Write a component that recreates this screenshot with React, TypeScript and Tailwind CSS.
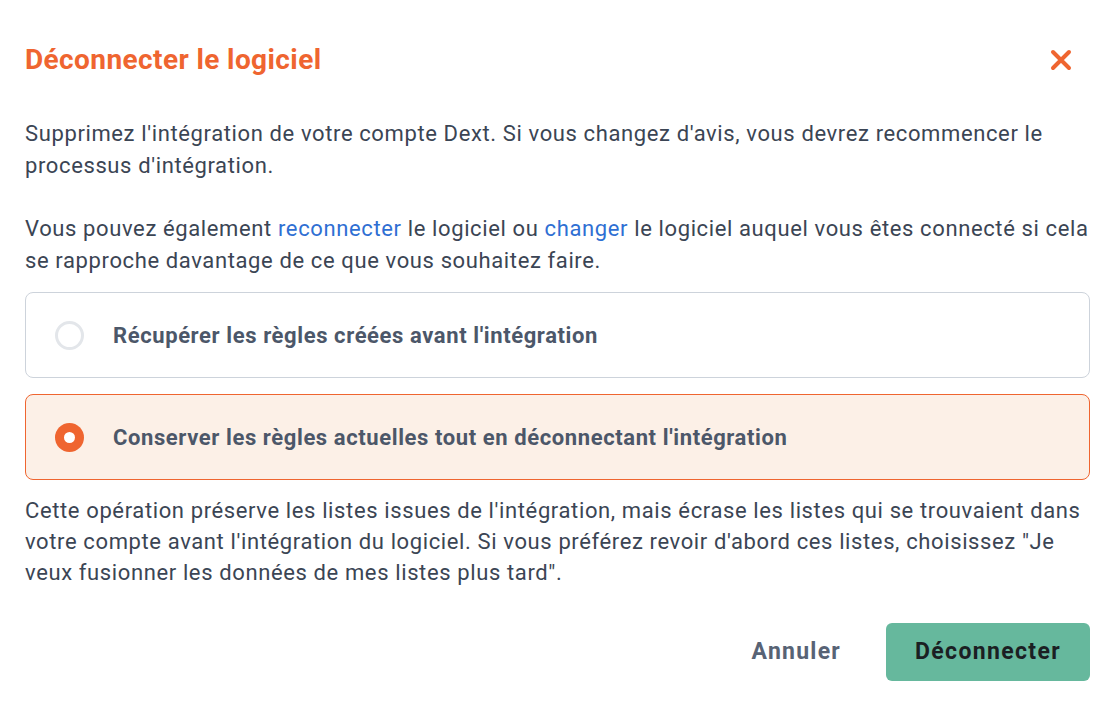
import React, { useState } from 'react';

const options = [
  { id: 'restore', label: "Récupérer les règles créées avant l'intégration" },
  { id: 'keep', label: "Conserver les règles actuelles tout en déconnectant l'intégration" },
];

export default function App() {
  const [selected, setSelected] = useState('keep');

  return (
    <div className="w-[1114px] h-[706px] bg-white font-['Roboto',sans-serif] text-[#3b4554] px-[25px] pt-[44px]">
      <div className="flex items-center justify-between h-[32px] pr-[16px]">
        <h2 className="text-[28px] font-bold text-[#ef6530] tracking-[0.4px]">Déconnecter le logiciel</h2>
        <button className="text-[#ef6530]">
          <svg width="24" height="24" viewBox="0 0 24 24" fill="none" stroke="currentColor" strokeWidth="4" strokeLinecap="round">
            <path d="M4 4l16 16M20 4L4 20" />
          </svg>
        </button>
      </div>

      <p className="mt-[42px] text-[22px] leading-[32px] tracking-[0.62px] pr-[10px]">
        Supprimez l'intégration de votre compte Dext. Si vous changez d'avis, vous devrez recommencer le processus d'intégration.
      </p>

      <p className="mt-[31px] text-[22px] leading-[32px] tracking-[0.62px]">
        Vous pouvez également <a className="text-[#2f6fd3]">reconnecter</a> le logiciel ou{' '}
        <a className="text-[#2f6fd3]">changer</a> le logiciel auquel vous êtes connecté si cela se rapproche davantage de ce que vous souhaitez faire.
      </p>

      <div className="mt-[15px] flex flex-col gap-[16px] mr-[-1px]">
        {options.map((o) => {
          const on = selected === o.id;
          return (
            <button
              key={o.id}
              onClick={() => setSelected(o.id)}
              className={`flex items-center h-[86px] rounded-[8px] border text-left pl-[29px] ${
                on ? 'border-[#ef6530] bg-[#fcf0e7]' : 'border-[#cdd3db] bg-white'
              }`}
            >
              {on ? (
                <span className="w-[29px] h-[29px] rounded-full bg-[#ef6530] flex items-center justify-center">
                  <span className="w-[11px] h-[11px] rounded-full bg-white" />
                </span>
              ) : (
                <span className="w-[29px] h-[29px] rounded-full border-[3px] border-[#e3e6ea]" />
              )}
              <span className="ml-[29px] text-[22px] font-bold text-[#4c5769] tracking-[0.6px]">{o.label}</span>
            </button>
          );
        })}
      </div>

      <p className="mt-[15px] text-[22px] leading-[31px] tracking-[0.62px]">
        Cette opération préserve les listes issues de l'intégration, mais écrase les listes qui se trouvaient dans votre compte avant l'intégration du logiciel. Si vous préférez revoir d'abord ces listes, choisissez "Je veux fusionner les données de mes listes plus tard".
      </p>

      <div className="mt-[35px] flex justify-end items-center gap-[45px] mr-[-1px]">
        <button className="text-[23px] font-bold text-[#586375] tracking-[1.25px]">Annuler</button>
        <button className="w-[204px] h-[58px] rounded-[6px] bg-[#66b89d] text-[23px] font-bold text-[#1b1f23] tracking-[1.35px]">
          Déconnecter
        </button>
      </div>
    </div>
  );
}
